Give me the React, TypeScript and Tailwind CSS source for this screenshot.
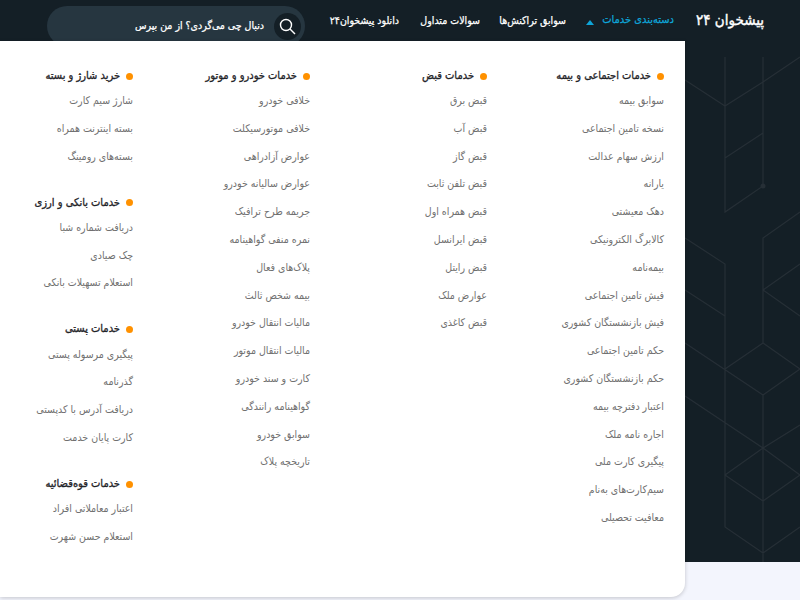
const columns: { title: string; items: string[] }[][] = [
  [
    {
      title: "خدمات اجتماعی و بیمه",
      items: ["سوابق بیمه", "نسخه تامین اجتماعی", "ارزش سهام عدالت", "یارانه", "دهک معیشتی", "کالابرگ الکترونیکی", "بیمه‌نامه", "فیش تامین اجتماعی", "فیش بازنشستگان کشوری", "حکم تامین اجتماعی", "حکم بازنشستگان کشوری", "اعتبار دفترچه بیمه", "اجاره نامه ملک", "پیگیری کارت ملی", "سیم‌کارت‌های به‌نام", "معافیت تحصیلی"],
    },
  ],
  [
    {
      title: "خدمات قبض",
      items: ["قبض برق", "قبض آب", "قبض گاز", "قبض تلفن ثابت", "قبض همراه اول", "قبض ایرانسل", "قبض رایتل", "عوارض ملک", "قبض کاغذی"],
    },
  ],
  [
    {
      title: "خدمات خودرو و موتور",
      items: ["خلافی خودرو", "خلافی موتورسیکلت", "عوارض آزادراهی", "عوارض سالیانه خودرو", "جریمه طرح ترافیک", "نمره منفی گواهینامه", "پلاک‌های فعال", "بیمه شخص ثالث", "مالیات انتقال خودرو", "مالیات انتقال موتور", "کارت و سند خودرو", "گواهینامه رانندگی", "سوابق خودرو", "تاریخچه پلاک"],
    },
  ],
  [
    { title: "خرید شارژ و بسته", items: ["شارژ سیم کارت", "بسته اینترنت همراه", "بسته‌های رومینگ"] },
    { title: "خدمات بانکی و ارزی", items: ["دریافت شماره شبا", "چک صیادی", "استعلام تسهیلات بانکی"] },
    { title: "خدمات پستی", items: ["پیگیری مرسوله پستی", "گذرنامه", "دریافت آدرس با کدپستی", "کارت پایان خدمت"] },
    { title: "خدمات قوه‌قضائیه", items: ["اعتبار معاملاتی افراد", "استعلام حسن شهرت"] },
  ],
];

const lines =
  "M685 80L725 106L763 82L800 57M725 57V212L763 186V57M725 158L763 133M685 238L725 264V527L763 553L800 527M685 290L725 316M685 343L763 395L800 369L763 343L725 369M763 395V562M685 396L763 448L800 425M763 448L725 475L763 501L800 475L763 448M800 212L763 238V343M800 264L763 290L800 316";

export default function App() {
  return (
    <div
      dir="rtl"
      className="relative h-[600px] w-[800px] overflow-hidden bg-[#f3f5fd] font-['DejaVu_Sans_Condensed','DejaVu_Sans',sans-serif]"
    >
      <header className="relative flex h-[41px] items-center overflow-hidden whitespace-nowrap bg-[#141f26] pr-[36px] text-white">
        <div className="ml-[21px] w-[69px] text-[15px] [-webkit-text-stroke:0.4px_#ffffff]">پیشخوان ۲۴</div>
        <nav className="flex items-center text-[10.5px] [-webkit-text-stroke:0.25px]">
          <span className="flex w-[108px] items-center gap-[8px] text-[11px] text-[#0ea5d8]">
            دسته‌بندی خدمات
            <span className="mt-[4px] h-0 w-0 border-x-[4px] border-b-[5px] border-x-transparent border-b-[#0ea5d8]" />
          </span>
          <span className="w-[86px]">سوابق تراکنش‌ها</span>
          <span className="w-[81px]">سوالات متداول</span>
          <span className="w-[94px]">دانلود پیشخوان۲۴</span>
        </nav>
        <div className="flex h-[40px] w-[258px] translate-y-[6px] items-center self-start rounded-[20px] bg-[#263640] pr-[4px]">
          <span className="flex h-[27px] w-[27px] items-center justify-center rounded-full bg-[#141f26]">
            <svg width="17" height="17" viewBox="0 0 17 17" fill="none" stroke="#fff" strokeWidth="1.4">
              <circle cx="7" cy="7" r="5.5" />
              <path d="M11 11L16 16" />
            </svg>
          </span>
          <span className="mr-[10px] text-[10.5px] [-webkit-text-stroke:0.25px]">دنبال چی می‌گردی؟ از من بپرس</span>
        </div>
      </header>

      <section className="relative h-[521px] bg-[#141f26]">
        <svg className="absolute left-0 top-[-41px]" width="800" height="600" fill="none" stroke="#262f36" strokeWidth="1.2">
          <path d={lines} />
          <circle cx="763" cy="186" r="2.5" fill="#262f36" stroke="none" />
        </svg>
      </section>

      <div className="absolute left-0 top-[41px] flex h-[556px] w-[685px] rounded-br-[14px] bg-white pr-[21px] pt-[26px] shadow-[0_1px_4px_rgba(0,0,0,0.2)]">
        {columns.map((col, i) => (
          <div key={i} className="flex w-[177px] shrink-0 flex-col gap-[23.4px]">
            {col.map((sec) => (
              <div key={sec.title}>
                <div className="flex h-[18px] items-center gap-[6px] text-[11px] text-[#1f2428] [-webkit-text-stroke:0.3px]">
                  <span className="h-[7px] w-[7px] shrink-0 rounded-full bg-[#ff9100]" />
                  {sec.title}
                </div>
                <ul className="mt-[2px] text-[10.5px] text-[#707070]">
                  {sec.items.map((it) => (
                    <li key={it} className="flex h-[27.8px] items-center">
                      {it}
                    </li>
                  ))}
                </ul>
              </div>
            ))}
          </div>
        ))}
      </div>
    </div>
  );
}
